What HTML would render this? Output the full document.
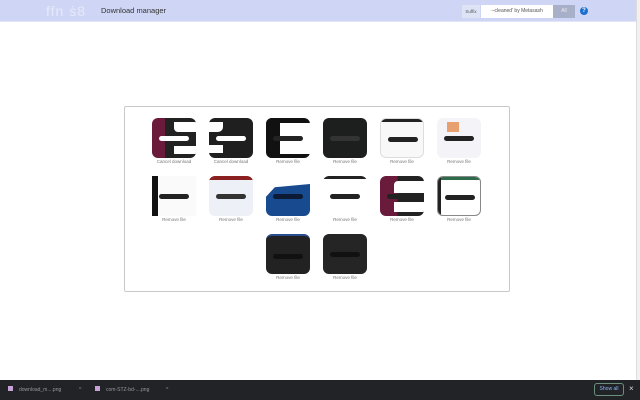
<!DOCTYPE html>
<html><head><meta charset="utf-8"><style>
*{margin:0;padding:0;box-sizing:border-box}
body{width:640px;height:400px;position:relative;overflow:hidden;background:#fff;font-family:"Liberation Sans",sans-serif}
.hdr{position:absolute;left:0;top:0;width:640px;height:22px;background:#cfd5f4;border-bottom:1px solid #e2e5f7}
.logo{position:absolute;left:46px;top:3px;font-size:14px;color:#e6e9fa;letter-spacing:1px}
.title{position:absolute;left:101px;top:6px;font-size:7.5px;color:#333}
.sfx{position:absolute;left:462px;top:5px;width:18px;height:13px;background:#dfe3f6;font-size:4.5px;color:#555;line-height:13px;text-align:center}
.inp{position:absolute;left:481px;top:5px;width:72px;height:13px;background:#fff;font-size:5px;color:#555;line-height:13px;text-align:center}
.btn{position:absolute;left:553px;top:5px;width:22px;height:13px;background:#a8afc8;font-size:5px;color:#eee;line-height:13px;text-align:center}
.help{position:absolute;left:580px;top:7px;width:8px;height:8px;border-radius:50%;background:#1a6fd0;color:#fff;font-size:6px;line-height:8px;text-align:center;font-weight:bold}
.sb{position:absolute;left:636px;top:0;width:4px;height:380px;background:#f1f1f1;border-left:1px solid #ddd}
.panel{position:absolute;left:124px;top:106px;width:386px;height:186px;border:1px solid #c9c9c9;border-radius:2px}
.t{position:absolute;width:44px;height:40px;border-radius:6px;overflow:hidden}
.p{position:absolute;left:7px;top:18px;width:30px;height:5px;border-radius:3px}
.l{position:absolute;width:60px;text-align:center;font-size:4.5px;color:#777}
.bar{position:absolute;left:0;top:380px;width:640px;height:20px;background:#222327}
.bar span{position:absolute;top:7px;font-size:5px;color:#999}
.ic{position:absolute;top:6px;width:5px;height:5px;background:#c7a2d8}
.show{position:absolute;left:594px;top:383px;width:30px;height:13px;border:1px solid #6c8f80;border-radius:3px;font-size:5px;color:#8ab4f8;line-height:11px;text-align:center}
</style></head><body>
<div class="hdr">
<div class="logo">ffn ṡ8</div>
<div class="title">Download manager</div>
<div class="sfx">Suffix</div><div class="inp">--cleaned' by Metasash</div><div class="btn">All</div>
<div class="help">?</div>
</div>
<div class="sb"></div>
<div class="panel"></div>

<div class="t" style="left:152px;top:118px;background:linear-gradient(90deg,#6a1a3a 0 30%,#222 30%)"><div style="position:absolute;left:22px;top:4px;width:22px;height:10px;background:#fff;border-radius:0 0 0 4px"></div><div style="position:absolute;left:22px;top:28px;width:22px;height:8px;background:#fff"></div><div class="p" style="background:#fff"></div></div>
<div class="l" style="left:144px;top:159px">Cancel download</div>
<div class="t" style="left:209px;top:118px;background:#1f1f1f"><div style="position:absolute;left:0;top:4px;width:14px;height:10px;background:#fff;border-radius:0 0 5px 0"></div><div style="position:absolute;left:0;top:27px;width:14px;height:8px;background:#fff"></div><div class="p" style="background:#fff"></div></div>
<div class="l" style="left:201px;top:159px">Cancel download</div>
<div class="t" style="left:266px;top:118px;background:#fff"><div style="position:absolute;left:0;top:0;width:44px;height:5px;background:#111"></div><div style="position:absolute;left:0;top:0;width:14px;height:40px;background:#111"></div><div style="position:absolute;left:0;top:36px;width:44px;height:4px;background:#111"></div><div class="p" style="background:#222"></div></div>
<div class="l" style="left:258px;top:159px">Remove file</div>
<div class="t" style="left:323px;top:118px;background:#1c1f1d"><div class="p" style="background:#333"></div></div>
<div class="l" style="left:315px;top:159px">Remove file</div>
<div class="t" style="left:380px;top:118px;background:#f8f8f8;border:1px solid #ddd"><div style="position:absolute;left:0;top:0;width:44px;height:3px;background:#222"></div><div class="p" style="background:#222"></div></div>
<div class="l" style="left:372px;top:159px">Remove file</div>
<div class="t" style="left:437px;top:118px;background:#f4f4f8"><div style="position:absolute;left:10px;top:4px;width:12px;height:10px;background:#e8a070"></div><div class="p" style="background:#222"></div></div>
<div class="l" style="left:429px;top:159px">Remove file</div>

<div class="t" style="left:152px;top:176px;background:#fafafa;border-radius:0"><div style="position:absolute;left:0;top:0;width:6px;height:40px;background:#111"></div><div class="p" style="background:#222"></div></div>
<div class="l" style="left:144px;top:217px">Remove file</div>
<div class="t" style="left:209px;top:176px;background:#eef0f8"><div style="position:absolute;left:0;top:0;width:44px;height:4px;background:#8a2020"></div><div class="p" style="background:#333"></div></div>
<div class="l" style="left:201px;top:217px">Remove file</div>
<div class="t" style="left:266px;top:176px;background:#fff"><div style="position:absolute;left:0;top:8px;width:44px;height:32px;background:#174a8f;clip-path:polygon(0 40%,20% 10%,100% 0,100% 100%,0 100%)"></div><div class="p" style="background:#0d1a33"></div></div>
<div class="l" style="left:258px;top:217px">Remove file</div>
<div class="t" style="left:323px;top:176px;background:#fff"><div style="position:absolute;left:0;top:0;width:44px;height:3px;background:#222"></div><div class="p" style="background:#222"></div></div>
<div class="l" style="left:315px;top:217px">Remove file</div>
<div class="t" style="left:380px;top:176px;background:linear-gradient(90deg,#6a1a3a 0 40%,#222 40%)"><div style="position:absolute;left:14px;top:5px;width:30px;height:12px;background:#fff;border-radius:4px 0 0 0"></div><div style="position:absolute;left:14px;top:26px;width:30px;height:10px;background:#fff"></div><div class="p" style="background:#222"></div></div>
<div class="l" style="left:372px;top:217px">Remove file</div>
<div class="t" style="left:437px;top:176px;background:#fff;border:1px solid #888"><div style="position:absolute;left:0;top:0;width:44px;height:3px;background:#2e6b4a"></div><div style="position:absolute;left:0;top:0;width:3px;height:40px;background:#222"></div><div class="p" style="background:#222"></div></div>
<div class="l" style="left:429px;top:217px">Remove file</div>

<div class="t" style="left:266px;top:234px;background:#222;border-top:2px solid #2a4d8f"><div class="p" style="background:#111"></div></div>
<div class="l" style="left:258px;top:275px">Remove file</div>
<div class="t" style="left:323px;top:234px;background:#252525"><div class="p" style="background:#111"></div></div>
<div class="l" style="left:315px;top:275px">Remove file</div>

<div class="bar">
<div class="ic" style="left:8px"></div><span style="left:19px">download_m....png</span><span style="left:79px">^</span>
<div class="ic" style="left:95px"></div><span style="left:106px">com-STZ-bd-....png</span><span style="left:166px">^</span>
</div>
<div class="show">Show all</div>
<div style="position:absolute;left:629px;top:384px;font-size:8px;color:#ddd">×</div>
</body></html>
